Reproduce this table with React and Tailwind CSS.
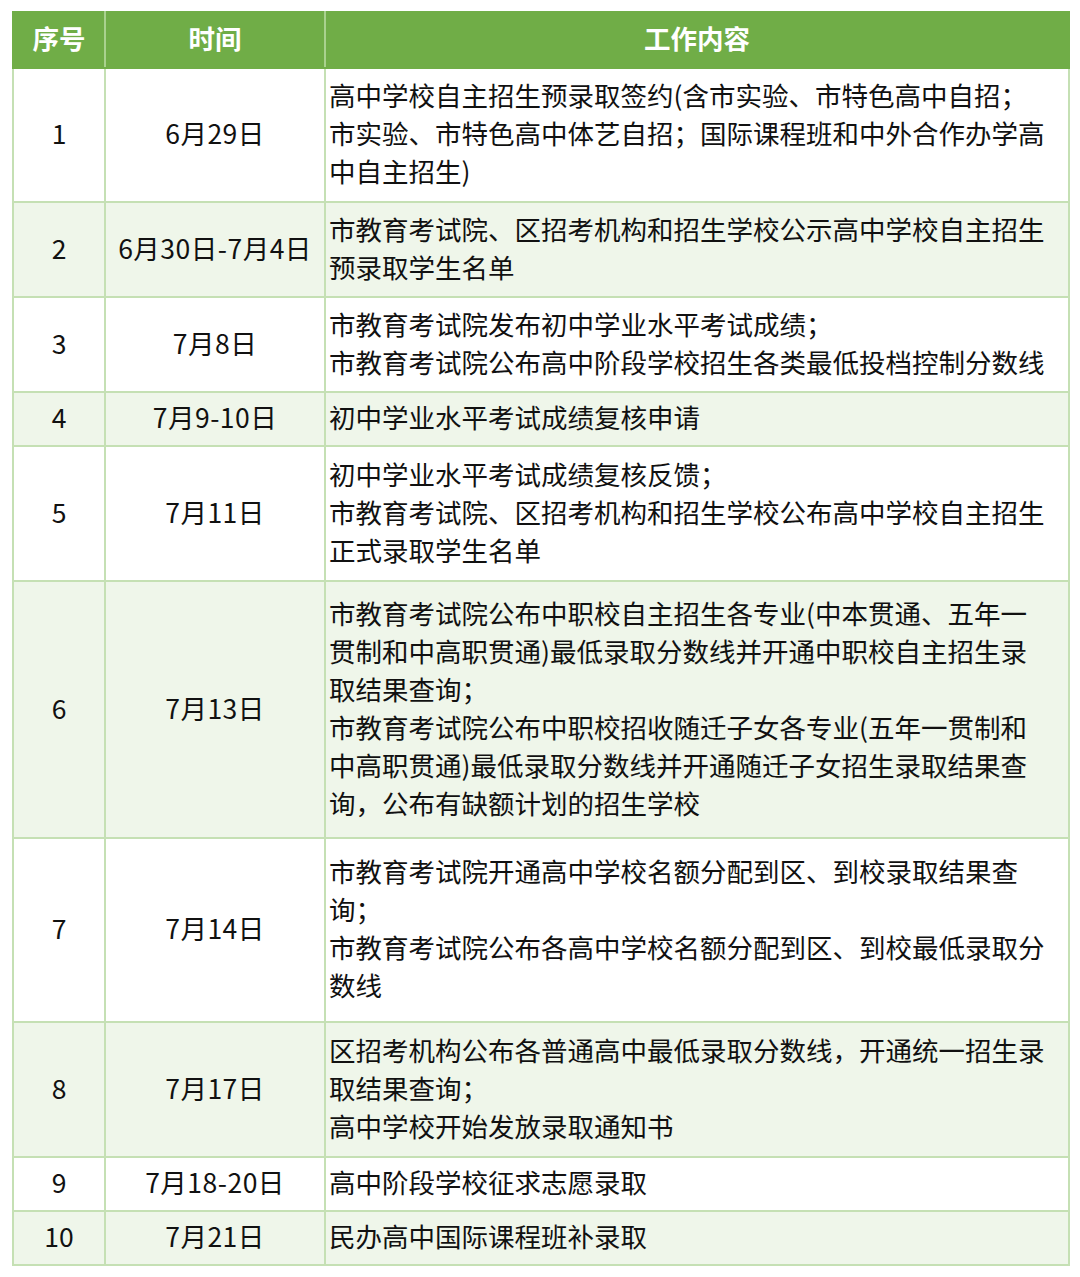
const rows = [
  { no: "1", date: "6月29日", h: "h-[134px]", lines: ["高中学校自主招生预录取签约(含市实验、市特色高中自招；", "市实验、市特色高中体艺自招；国际课程班和中外合作办学高", "中自主招生)"] },
  { no: "2", date: "6月30日-7月4日", h: "h-[95px]", lines: ["市教育考试院、区招考机构和招生学校公示高中学校自主招生", "预录取学生名单"] },
  { no: "3", date: "7月8日", h: "h-[95px]", lines: ["市教育考试院发布初中学业水平考试成绩；", "市教育考试院公布高中阶段学校招生各类最低投档控制分数线"] },
  { no: "4", date: "7月9-10日", h: "h-[54px]", lines: ["初中学业水平考试成绩复核申请"] },
  { no: "5", date: "7月11日", h: "h-[135px]", lines: ["初中学业水平考试成绩复核反馈；", "市教育考试院、区招考机构和招生学校公布高中学校自主招生", "正式录取学生名单"] },
  { no: "6", date: "7月13日", h: "h-[257px]", lines: ["市教育考试院公布中职校自主招生各专业(中本贯通、五年一", "贯制和中高职贯通)最低录取分数线并开通中职校自主招生录", "取结果查询；", "市教育考试院公布中职校招收随迁子女各专业(五年一贯制和", "中高职贯通)最低录取分数线并开通随迁子女招生录取结果查", "询，公布有缺额计划的招生学校"] },
  { no: "7", date: "7月14日", h: "h-[184px]", lines: ["市教育考试院开通高中学校名额分配到区、到校录取结果查", "询；", "市教育考试院公布各高中学校名额分配到区、到校最低录取分", "数线"] },
  { no: "8", date: "7月17日", h: "h-[135px]", lines: ["区招考机构公布各普通高中最低录取分数线，开通统一招生录", "取结果查询；", "高中学校开始发放录取通知书"] },
  { no: "9", date: "7月18-20日", h: "h-[54px]", lines: ["高中阶段学校征求志愿录取"] },
  { no: "10", date: "7月21日", h: "h-[54px]", lines: ["民办高中国际课程班补录取"] },
];

export default function App() {
  return (
    <div className="w-[1080px] min-h-[1277px] bg-white pt-[11px] pl-[12px]" style={{ fontFamily: '"Noto Sans CJK SC", "Noto Sans", sans-serif' }}>
      <table className="w-[1056px] border-collapse border-2 border-[#70AD47] table-fixed text-[26.5px] text-[#111]">
        <colgroup>
          <col className="w-[92px]" />
          <col className="w-[220px]" />
          <col className="w-[744px]" />
        </colgroup>
        <thead>
          <tr className="h-[56px] bg-[#70AD47] text-white font-bold">
            <th className="border-2 border-[#70AD47] border-r-[#A9D18E] text-center pb-[4px]">序号</th>
            <th className="border-2 border-[#70AD47] border-r-[#A9D18E] text-center pb-[4px]">时间</th>
            <th className="border-2 border-[#70AD47] text-center pb-[4px]">工作内容</th>
          </tr>
        </thead>
        <tbody>
          {rows.map((r, i) => (
            <tr key={r.no} className={`${r.h} ${i % 2 === 1 ? "bg-[#EFF6EA]" : "bg-white"}`}>
              <td className="border-2 border-[#C5E0B4] text-center leading-[38px] pb-[4px]">{r.no}</td>
              <td className="border-2 border-[#C5E0B4] text-center leading-[38px] whitespace-nowrap pb-[4px] tracking-[0.5px]">{r.date}</td>
              <td className="border-2 border-[#C5E0B4] pl-[3px] leading-[38px] whitespace-nowrap pb-[4px]">
                {r.lines.map((l, j) => (
                  <div key={j}>{l}</div>
                ))}
              </td>
            </tr>
          ))}
        </tbody>
      </table>
    </div>
  );
}
